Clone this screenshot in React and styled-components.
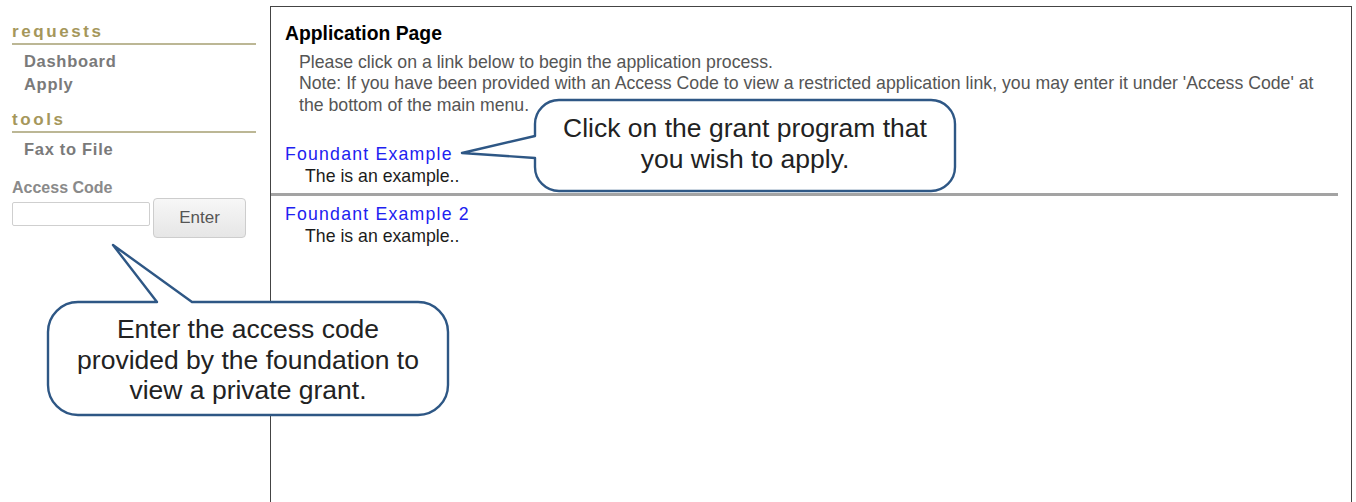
import React from "react";
import styled, { createGlobalStyle } from "styled-components";

const GlobalStyle = createGlobalStyle`
  html, body {
    margin: 0;
    padding: 0;
    background: #fff;
  }
  body {
    font-family: "Liberation Sans", Arial, sans-serif;
  }
`;

const Page = styled.div`
  position: relative;
  display: flex;
  width: 1356px;
  height: 502px;
  overflow: hidden;
`;

const Sidebar = styled.aside`
  width: 244px;
  flex-shrink: 0;
  padding: 22px 13px 0 12px;
`;

const MenuHeading = styled.div`
  font-size: 17px;
  font-weight: bold;
  line-height: 20px;
  letter-spacing: 2.6px;
  color: #a5975b;
  padding-bottom: 1px;
  border-bottom: 2px solid #bcb795;
  margin-top: ${(p) => (p.$first ? "0" : "15px")};
`;

const MenuList = styled.div`
  display: flex;
  flex-direction: column;
  padding: 5px 0 0 12px;
`;

const MenuItem = styled.a`
  font-size: 16.5px;
  font-weight: bold;
  line-height: 22.7px;
  letter-spacing: 0.7px;
  color: #7a7a7a;
  text-decoration: none;
  cursor: pointer;
`;

const CodeLabel = styled.div`
  margin-top: 17px;
  font-size: 16px;
  font-weight: bold;
  line-height: 20px;
  color: #8a8a8a;
`;

const CodeRow = styled.div`
  display: flex;
  align-items: flex-start;
  gap: 3px;
`;

const CodeInput = styled.input`
  box-sizing: border-box;
  width: 138px;
  height: 24px;
  margin-top: 4px;
  border: 1px solid #cfcfcf;
  border-radius: 2px;
  background: #fff;
`;

const EnterButton = styled.button`
  box-sizing: border-box;
  width: 93px;
  height: 40px;
  border: 1px solid #cdcdcd;
  border-radius: 4px;
  background: linear-gradient(#f7f7f7, #e6e6e6);
  font-family: "Liberation Sans", Arial, sans-serif;
  font-size: 17px;
  color: #555;
  cursor: pointer;
`;

const Panel = styled.main`
  flex: 1;
  margin: 6px 4px 0 1px;
  border: 1px solid #444;
  border-bottom: none;
  padding-top: 14px;
  font-size: 17.7px;
  line-height: 21.5px;
`;

const Title = styled.h1`
  margin: 0 0 6.6px 14px;
  font-size: 19.35px;
  line-height: 24px;
  font-weight: bold;
  color: #000;
`;

const Intro = styled.p`
  margin: 0 13px 0 28px;
  color: #555;
`;

const Program = styled.div`
  padding-left: 14px;
  margin-top: ${(p) => p.$gap}px;
  line-height: 22px;
`;

const ProgramLink = styled.a`
  display: block;
  color: #2121f0;
  letter-spacing: 1.2px;
  text-decoration: none;
  cursor: pointer;
`;

const ProgramDesc = styled.div`
  padding-left: 20px;
  color: #1c1c1c;
`;

const Divider = styled.hr`
  margin: 6px 13px 0 0;
  border: none;
  border-top: 3px solid #a3a3a3;
  height: 0;
`;

/* speech-bubble notes laid over the page */
const Callout = styled.div`
  position: absolute;
  left: ${(p) => p.$x}px;
  top: ${(p) => p.$y}px;
  width: ${(p) => p.$w}px;
  height: ${(p) => p.$h}px;
  display: flex;
  align-items: center;
  justify-content: center;
`;

const BubbleShape = styled.svg`
  position: absolute;
  left: 0;
  top: 0;
  overflow: visible;
`;

const CalloutText = styled.div`
  position: relative;
  top: ${(p) => p.$shift}px;
  text-align: center;
  font-size: 26.5px;
  line-height: ${(p) => p.$lh}px;
  color: #222;
`;

function Bubble({ x, y, w, h, d, lh, shift = 0, children }) {
  return (
    <Callout $x={x} $y={y} $w={w} $h={h}>
      <BubbleShape width={w} height={h}>
        <path d={d} fill="#fff" stroke="#2e5785" strokeWidth="2.4" strokeLinejoin="round" />
      </BubbleShape>
      <CalloutText $lh={lh} $shift={shift}>
        {children}
      </CalloutText>
    </Callout>
  );
}

const programs = [
  { name: "Foundant Example", desc: "The is an example.." },
  { name: "Foundant Example 2", desc: "The is an example.." },
];

export default function App() {
  return (
    <>
      <GlobalStyle />
      <Page>
        <Sidebar>
          <MenuHeading $first>requests</MenuHeading>
          <MenuList>
            <MenuItem>Dashboard</MenuItem>
            <MenuItem>Apply</MenuItem>
          </MenuList>
          <MenuHeading>tools</MenuHeading>
          <MenuList>
            <MenuItem>Fax to File</MenuItem>
          </MenuList>
          <CodeLabel>Access Code</CodeLabel>
          <CodeRow>
            <CodeInput type="text" />
            <EnterButton>Enter</EnterButton>
          </CodeRow>
        </Sidebar>

        <Panel>
          <Title>Application Page</Title>
          <Intro>
            Please click on a link below to begin the application process.
            <br />
            Note: If you have been provided with an Access Code to view a restricted application
            link, you may enter it under 'Access Code' at the bottom of the main menu.
          </Intro>
          <Program $gap={26.5}>
            <ProgramLink>{programs[0].name}</ProgramLink>
            <ProgramDesc>{programs[0].desc}</ProgramDesc>
          </Program>
          <Divider />
          <Program $gap={7}>
            <ProgramLink>{programs[1].name}</ProgramLink>
            <ProgramDesc>{programs[1].desc}</ProgramDesc>
          </Program>
        </Panel>

        <Bubble
          x={535}
          y={100}
          w={420}
          h={91}
          lh={31}
          shift={-2}
          d="M 0 36 L -73 53 L 0 58 V 67 A 24 24 0 0 0 24 91 H 396 A 24 24 0 0 0 420 67 V 24 A 24 24 0 0 0 396 0 H 24 A 24 24 0 0 0 0 24 Z"
        >
          Click on the grant program that
          <br />
          you wish to apply.
        </Bubble>

        <Bubble
          x={48}
          y={302}
          w={400}
          h={113}
          lh={30.5}
          shift={1.5}
          d="M 30 0 H 109 L 65 -57 L 144 0 H 370 A 30 30 0 0 1 400 30 V 83 A 30 30 0 0 1 370 113 H 30 A 30 30 0 0 1 0 83 V 30 A 30 30 0 0 1 30 0 Z"
        >
          Enter the access code
          <br />
          provided by the foundation to
          <br />
          view a private grant.
        </Bubble>
      </Page>
    </>
  );
}
